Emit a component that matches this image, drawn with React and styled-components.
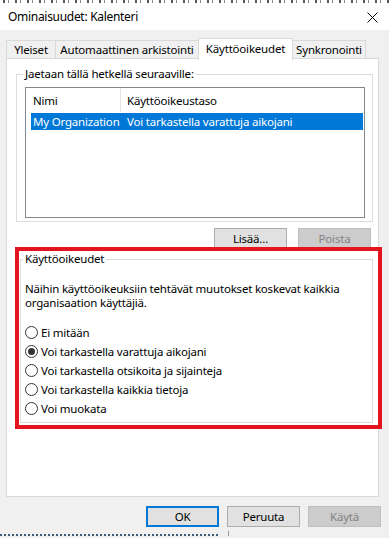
import React from "react";
import styled, { createGlobalStyle } from "styled-components";

const GlobalStyle = createGlobalStyle`
  * { box-sizing: border-box; }
  html, body {
    margin: 0;
    padding: 0;
    background: #f0f0f0;
  }
  body {
    font-family: "Noto Sans", "Liberation Sans", sans-serif;
    font-size: 11.5px;
    letter-spacing: -0.2px;
    color: #000;
  }
`;

const Window = styled.div`
  width: 389px;
  height: 538px;
  overflow: hidden;
  background: #f0f0f0;
  display: flex;
  flex-direction: column;
  position: relative;
`;

const BackStrip = styled.div`
  height: 3px;
  background: repeating-linear-gradient(
    90deg,
    #ffffff 0 3px,
    #5a5a5a 3px 5px,
    #ffffff 5px 8px,
    #8a8a8a 8px 9px,
    #ffffff 9px 12px
  );
`;

const TitleBar = styled.div`
  height: 27px;
  background: #ffffff;
  display: flex;
  align-items: center;
  justify-content: space-between;
  padding: 0 11px 0 8px;
`;

const Title = styled.span`
  font-size: 12px;
  letter-spacing: -0.3px;
  color: #000;
`;

const Close = styled.svg`
  width: 11px;
  height: 11px;
  margin-top: 1px;
`;

const TabRow = styled.div`
  display: flex;
  align-items: flex-end;
  height: 21px;
  margin-top: 8px;
  padding-left: 6px;
  position: relative;
  z-index: 2;
`;

const Tab = styled.div`
  width: ${(p) => p.w}px;
  height: ${(p) => (p.active ? 22 : 19)}px;
  margin-left: ${(p) => (p.first ? 0 : -1)}px;
  margin-bottom: ${(p) => (p.active ? -1 : 0)}px;
  padding-bottom: ${(p) => (p.active ? 2 : 0)}px;
  background: ${(p) => (p.active ? "#ffffff" : "#f0f0f0")};
  border: 1px solid #d9d9d9;
  border-bottom: ${(p) => (p.active ? "none" : "1px solid #d9d9d9")};
  display: flex;
  align-items: center;
  justify-content: center;
  white-space: nowrap;
  position: relative;
  z-index: ${(p) => (p.active ? 2 : 1)};
`;

const Panel = styled.div`
  margin: -1px 10px 0 6px;
  height: 439px;
  background: #ffffff;
  border: 1px solid #d9d9d9;
  display: flex;
  flex-direction: column;
  position: relative;
  z-index: 1;
`;

const Group = styled.fieldset`
  margin: ${(p) => p.m};
  width: ${(p) => p.w}px;
  padding: ${(p) => p.pad};
  border: 1px solid #dcdcdc;
  min-width: 0;
`;

const Legend = styled.legend`
  padding: 0 2px;
  margin-left: -2px;
  line-height: 16px;
  height: 16px;
`;

const ListView = styled.div`
  height: 131px;
  border: 1px solid #828790;
  background: #ffffff;
  display: flex;
  flex-direction: column;
`;

const HeaderRow = styled.div`
  display: flex;
  height: 24px;
  align-items: stretch;
`;

const HeaderCell = styled.div`
  width: ${(p) => (p.w ? `${p.w}px` : "auto")};
  flex: ${(p) => (p.w ? "none" : 1)};
  padding-left: ${(p) => p.pl}px;
  border-right: ${(p) => (p.divider ? "1px solid #e5e5e5" : "none")};
  display: flex;
  align-items: center;
`;

const ItemRow = styled.div`
  display: flex;
  height: 17px;
  margin: 1px 1px 0 5px;
  align-items: center;
  background: ${(p) => (p.selected ? "#0078d7" : "transparent")};
  color: ${(p) => (p.selected ? "#ffffff" : "#000000")};
`;

const ItemCell = styled.div`
  width: ${(p) => (p.w ? `${p.w}px` : "auto")};
  flex: ${(p) => (p.w ? "none" : 1)};
  padding-left: ${(p) => p.pl}px;
  white-space: nowrap;
`;

const ButtonRow = styled.div`
  display: flex;
  justify-content: flex-end;
  gap: ${(p) => p.gap}px;
  margin: ${(p) => p.m};
`;

const Button = styled.div`
  width: 73px;
  height: ${(p) => p.h}px;
  display: flex;
  align-items: center;
  justify-content: center;
  background: ${(p) => (p.disabled ? "#cccccc" : "#e1e1e1")};
  border: ${(p) =>
    p.primary
      ? "2px solid #0078d7"
      : p.disabled
      ? "1px solid #bfbfbf"
      : "1px solid #adadad"};
  color: ${(p) => (p.disabled ? "#838383" : "#000000")};
`;

const RedFrame = styled.div`
  margin: -1px -4px 0 8px;
  height: 182px;
  border: 4px solid #e3141d;
  padding: 0 6px 0 1px;
  position: relative;
  z-index: 3;
`;

const Description = styled.p`
  margin: 15px 0 13px;
  line-height: 14px;
`;

const RadioList = styled.div`
  display: flex;
  flex-direction: column;
`;

const RadioRow = styled.label`
  display: flex;
  align-items: center;
  height: 19px;
  gap: 3px;
`;

const RadioCircle = styled.span`
  width: 13px;
  height: 13px;
  border-radius: 50%;
  border: 1px solid #333333;
  background: #ffffff;
  display: flex;
  align-items: center;
  justify-content: center;
  flex: none;

  &::after {
    content: "";
    width: 7px;
    height: 7px;
    border-radius: 50%;
    background: #333333;
    display: ${(p) => (p.checked ? "block" : "none")};
  }
`;

const BottomStrip = styled.div`
  margin-top: auto;
  height: 7px;
  display: flex;
  align-items: flex-end;
  padding-bottom: 2px;
`;

const Dotted = styled.div`
  width: 218px;
  border-top: 2px dotted #3f5d78;
`;

const Tick = styled.div`
  width: 1px;
  height: 5px;
  margin-left: 10px;
  background: #9a9a9a;
`;

const options = [
  "Ei mitään",
  "Voi tarkastella varattuja aikojani",
  "Voi tarkastella otsikoita ja sijainteja",
  "Voi tarkastella kaikkia tietoja",
  "Voi muokata",
];

const tabs = [
  { label: "Yleiset", w: 50 },
  { label: "Automaattinen arkistointi", w: 144 },
  { label: "Käyttöoikeudet", w: 95, active: true },
  { label: "Synkronointi", w: 74 },
];

export default function App() {
  return (
    <>
      <GlobalStyle />
      <Window>
        <BackStrip />
        <TitleBar>
          <Title>Ominaisuudet: Kalenteri</Title>
          <Close viewBox="0 0 11 11">
            <path d="M0.5 0.5 L10.5 10.5 M10.5 0.5 L0.5 10.5" stroke="#000" strokeWidth="1" />
          </Close>
        </TitleBar>

        <TabRow>
          {tabs.map((t, i) => (
            <Tab key={t.label} w={t.w} active={t.active} first={i === 0}>
              {t.label}
            </Tab>
          ))}
        </TabRow>

        <Panel>
          <Group m="7px 0 0 9px" w={357} pad="5px 7px 3px 8px">
            <Legend>Jaetaan tällä hetkellä seuraaville:</Legend>
            <ListView>
              <HeaderRow>
                <HeaderCell w={95} pl={7} divider>
                  Nimi
                </HeaderCell>
                <HeaderCell pl={6}>Käyttöoikeustaso</HeaderCell>
              </HeaderRow>
              <ItemRow selected>
                <ItemCell w={90} pl={2}>
                  My Organization
                </ItemCell>
                <ItemCell pl={6}>Voi tarkastella varattuja aikojani</ItemCell>
              </ItemRow>
            </ListView>
          </Group>

          <ButtonRow gap={11} m="6px 7px 0 0">
            <Button h={20}>Lisää...</Button>
            <Button h={20} disabled>
              Poista
            </Button>
          </ButtonRow>

          <RedFrame>
            <Group m="0" w={353} pad="0 6px 4px 4px">
              <Legend>Käyttöoikeudet</Legend>
              <Description>
                Näihin käyttöoikeuksiin tehtävät muutokset koskevat kaikkia
                <br />
                organisaation käyttäjiä.
              </Description>
              <RadioList>
                {options.map((o, i) => (
                  <RadioRow key={o}>
                    <RadioCircle checked={i === 1} />
                    {o}
                  </RadioRow>
                ))}
              </RadioList>
            </Group>
          </RedFrame>
        </Panel>

        <ButtonRow gap={8} m="9px 8px 0 0">
          <Button h={21} primary>
            OK
          </Button>
          <Button h={21}>Peruuta</Button>
          <Button h={21} disabled>
            Käytä
          </Button>
        </ButtonRow>

        <BottomStrip>
          <Dotted />
          <Tick />
        </BottomStrip>
      </Window>
    </>
  );
}
